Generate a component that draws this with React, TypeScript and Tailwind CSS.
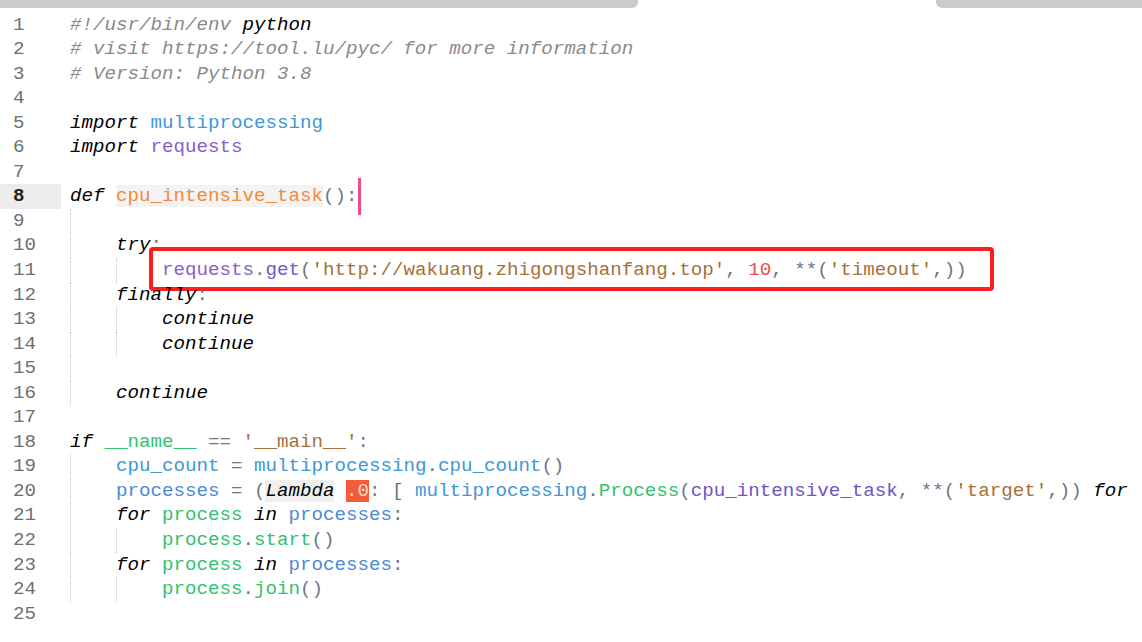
import React from "react";

type Tok = [string, string];
type Line = { guides?: number; indent?: number; toks: Tok[]; active?: boolean; boxed?: boolean; cursor?: boolean };

const kw = "italic text-black";
const cm = "italic text-[#8a8a8a]";
const pn = "text-[#6b7785]";
const bl = "text-[#3d98d5]";
const bl2 = "text-[#4a8ad9]";
const pu = "text-[#8a5ec7]";
const pu2 = "text-[#6a5ad0]";
const or = "text-[#f58a3a] bg-[#f3f3f3]";
const gr = "text-[#2ec36e]";
const st = "text-[#a6703a]";
const nu = "text-[#e4504f]";

const lines: Line[] = [
  { toks: [["#!/usr/bin/env ", cm], ["python", kw]] },
  { toks: [["# visit https://tool.lu/pyc/ for more information", cm]] },
  { toks: [["# Version: Python 3.8", cm]] },
  { toks: [] },
  { toks: [["import ", kw], ["multiprocessing", bl]] },
  { toks: [["import ", kw], ["requests", pu]] },
  { toks: [] },
  { active: true, cursor: true, toks: [["def ", kw], ["cpu_intensive_task", or], ["():", pn]] },
  { guides: 1, toks: [] },
  { guides: 1, indent: 1, toks: [["try", kw], [":", pn]] },
  {
    guides: 2,
    indent: 2,
    boxed: true,
    toks: [
      ["requests", pu],
      [".", pn],
      ["get", pu2],
      ["(", pn],
      ["'http://wakuang.zhigongshanfang.top'", st],
      [", ", pn],
      ["10", nu],
      [", **(", pn],
      ["'timeout'", st],
      [",))", pn],
    ],
  },
  { guides: 1, indent: 1, toks: [["finally", kw], [":", pn]] },
  { guides: 2, indent: 2, toks: [["continue", kw]] },
  { guides: 2, indent: 2, toks: [["continue", kw]] },
  { guides: 1, toks: [] },
  { guides: 1, indent: 1, toks: [["continue", kw]] },
  { toks: [] },
  { toks: [["if ", kw], ["__name__", gr], [" == ", pn], ["'__main__'", st], [":", pn]] },
  { guides: 1, indent: 1, toks: [["cpu_count", bl], [" = ", pn], ["multiprocessing", bl], [".", pn], ["cpu_count", bl], ["()", pn]] },
  {
    guides: 1,
    indent: 1,
    toks: [
      ["processes", bl2],
      [" = (", pn],
      ["Lambda", "italic text-black bg-[#efefef]"],
      [" ", pn],
      [".0", "bg-[#f55a3b] text-[#ffd6c8]"],
      [": [ ", pn],
      ["multiprocessing", bl],
      [".", pn],
      ["Process", gr],
      ["(", pn],
      ["cpu_intensive_task", "text-[#7054c8]"],
      [", **(", pn],
      ["'target'", st],
      [",)) ", pn],
      ["for", kw],
    ],
  },
  { guides: 1, indent: 1, toks: [["for ", kw], ["process", gr], [" in ", kw], ["processes", bl2], [":", pn]] },
  { guides: 2, indent: 2, toks: [["process", gr], [".", pn], ["start", gr], ["()", pn]] },
  { guides: 1, indent: 1, toks: [["for ", kw], ["process", gr], [" in ", kw], ["processes", bl2], [":", pn]] },
  { guides: 2, indent: 2, toks: [["process", gr], [".", pn], ["join", gr], ["()", pn]] },
  { toks: [] },
];

function CodeLine({ line, n }: { line: Line; n: number }) {
  const guides = line.guides ?? 0;
  const units = Math.max(guides, line.indent ?? 0);
  return (
    <div className="flex h-[24.55px] items-center">
      <div
        className={
          "h-full w-[61px] shrink-0 pl-[13px] " +
          (line.active ? "bg-[#ececec] font-bold text-[#222]" : "text-[#6f6f6f]")
        }
      >
        {n}
      </div>
      <div className="ml-[9px] flex h-full items-center whitespace-pre">
        {Array.from({ length: units }).map((_, i) => (
          <span
            key={i}
            className={
              "inline-block h-full w-[46px] " + (i < guides ? "border-l border-dotted border-[#c4c4c4]" : "")
            }
          />
        ))}
        <span className="relative">
          {line.toks.map(([t, c], i) => (
            <span key={i} className={c}>
              {t}
            </span>
          ))}
          {line.boxed && (
            <span className="pointer-events-none absolute -left-[13px] -right-[27px] -top-[11px] -bottom-[9px] rounded-[4px] border-[4px] border-[#ff1c1c]" />
          )}
        </span>
        {line.cursor && <span className="ml-[1px] inline-block h-[37px] w-[3px] bg-[#f2498d]" />}
      </div>
    </div>
  );
}

export default function App() {
  return (
    <div
      className="h-[642px] w-[1142px] overflow-hidden bg-white text-[19.17px] leading-[24.5px]"
      style={{ fontFamily: "'Liberation Mono', 'DejaVu Sans Mono', monospace" }}
    >
      <div className="flex h-[8px] justify-between">
        <div className="w-[638px] rounded-br-[6px] bg-[#cbcbcb]" />
        <div className="w-[206px] rounded-bl-[6px] bg-[#cbcbcb]" />
      </div>
      <div className="pt-[4.5px]">
        {lines.map((l, i) => (
          <CodeLine key={i} line={l} n={i + 1} />
        ))}
      </div>
    </div>
  );
}
